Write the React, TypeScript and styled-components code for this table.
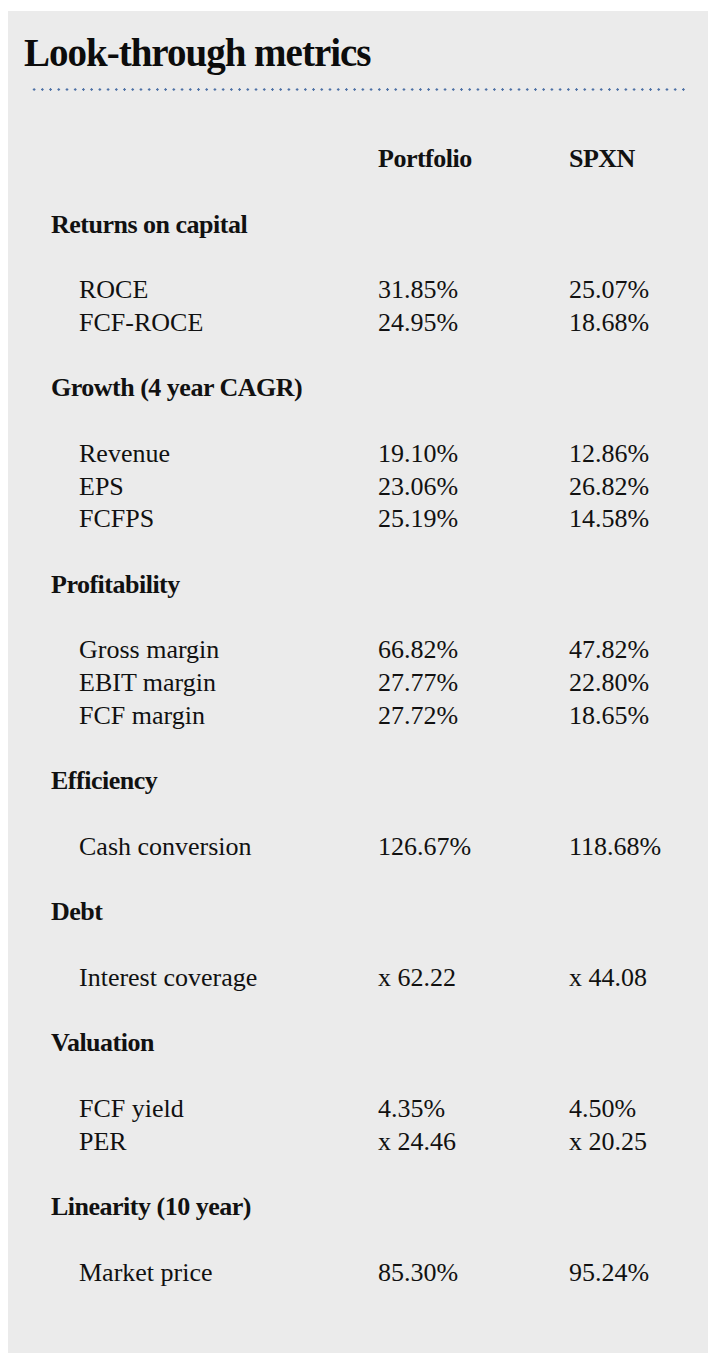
import React from "react";
import styled, { createGlobalStyle } from "styled-components";

const ROW = 32.76;

const Global = createGlobalStyle`
  html, body { margin: 0; padding: 0; background: #ffffff; }
  body { font-family: "Liberation Serif", "Times New Roman", serif; color: #111111; }
`;

const Page = styled.div`
  padding: 11px 10px 11px 8px;
`;

const Panel = styled.section`
  width: 700px;
  height: 1342px;
  box-sizing: border-box;
  background: #ebebeb;
  padding: 22px 20px 0 16px;
  display: flex;
  flex-direction: column;
`;

const Title = styled.h1`
  margin: 0;
  font-size: 39px;
  line-height: 40px;
  font-weight: 700;
  letter-spacing: -1px;
  color: #0c0c0c;
`;

const DottedRule = styled.div`
  margin: 15px 0 0 6px;
  height: 3px;
  width: 660px;
  background-image: radial-gradient(circle, #4d71a6 1px, transparent 1.4px);
  background-size: 8.23px 3px;
  background-repeat: repeat-x;
`;

const Table = styled.div`
  margin-top: 52px;
  padding-left: 27px;
  display: flex;
  flex-direction: column;
`;

const Row = styled.div<{ $gapBefore?: boolean; $gapAfter?: boolean }>`
  display: grid;
  grid-template-columns: 327px 191px 1fr;
  align-items: center;
  height: ${ROW}px;
  margin-top: ${(p) => (p.$gapBefore ? `${ROW}px` : "0")};
  margin-bottom: ${(p) => (p.$gapAfter ? `${ROW}px` : "0")};
  font-size: 26px;
  line-height: ${ROW}px;
`;

const HeadCell = styled.div`
  font-weight: 700;
  letter-spacing: -0.5px;
  white-space: nowrap;
`;

const ItemLabel = styled.div`
  padding-left: 28px;
  white-space: nowrap;
`;

const Value = styled.div`
  white-space: nowrap;
`;

type Section = { title: string; items: [string, string, string][] };

const sections: Section[] = [
  {
    title: "Returns on capital",
    items: [
      ["ROCE", "31.85%", "25.07%"],
      ["FCF-ROCE", "24.95%", "18.68%"],
    ],
  },
  {
    title: "Growth (4 year CAGR)",
    items: [
      ["Revenue", "19.10%", "12.86%"],
      ["EPS", "23.06%", "26.82%"],
      ["FCFPS", "25.19%", "14.58%"],
    ],
  },
  {
    title: "Profitability",
    items: [
      ["Gross margin", "66.82%", "47.82%"],
      ["EBIT margin", "27.77%", "22.80%"],
      ["FCF margin", "27.72%", "18.65%"],
    ],
  },
  {
    title: "Efficiency",
    items: [["Cash conversion", "126.67%", "118.68%"]],
  },
  {
    title: "Debt",
    items: [["Interest coverage", "x 62.22", "x 44.08"]],
  },
  {
    title: "Valuation",
    items: [
      ["FCF yield", "4.35%", "4.50%"],
      ["PER", "x 24.46", "x 20.25"],
    ],
  },
  {
    title: "Linearity (10 year)",
    items: [["Market price", "85.30%", "95.24%"]],
  },
];

export default function App() {
  return (
    <>
      <Global />
      <Page>
        <Panel>
          <Title>Look-through metrics</Title>
          <DottedRule />
          <Table>
            <Row>
              <div />
              <HeadCell>Portfolio</HeadCell>
              <HeadCell>SPXN</HeadCell>
            </Row>
            {sections.map((s) => (
              <React.Fragment key={s.title}>
                <Row $gapBefore $gapAfter>
                  <HeadCell>{s.title}</HeadCell>
                  <div />
                  <div />
                </Row>
                {s.items.map(([label, a, b]) => (
                  <Row key={label}>
                    <ItemLabel>{label}</ItemLabel>
                    <Value>{a}</Value>
                    <Value>{b}</Value>
                  </Row>
                ))}
              </React.Fragment>
            ))}
          </Table>
        </Panel>
      </Page>
    </>
  );
}
